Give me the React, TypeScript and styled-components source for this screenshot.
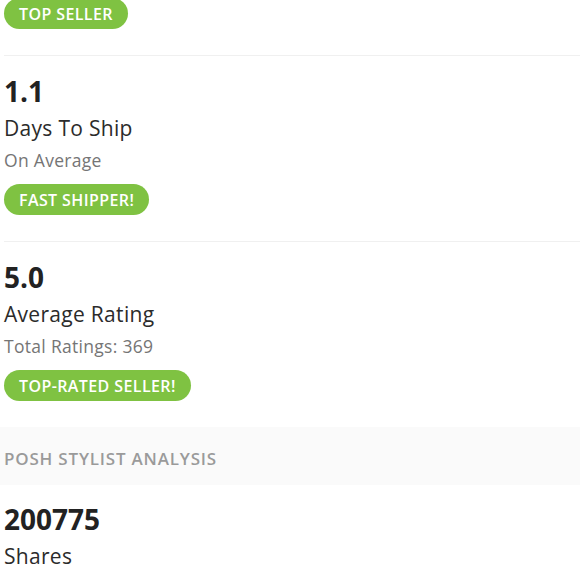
import { FC } from 'react';
import styled, { createGlobalStyle } from 'styled-components';

const GlobalStyle = createGlobalStyle`
  html, body {
    margin: 0;
    padding: 0;
    background: #ffffff;
  }
  body {
    font-family: 'Open Sans', 'Lato', Arial, sans-serif;
    color: #222222;
    overflow: hidden;
  }
`;

const Page = styled.div`
  width: 580px;
  margin-top: -2px;
`;

const StatSection = styled.section<{ $first?: boolean }>`
  margin-left: 4px;
  padding: ${({ $first }) => ($first ? '0 0 26px' : '17px 0 26px')};
  border-bottom: 1px solid #f0f0f0;
  display: flex;
  flex-direction: column;
  align-items: flex-start;
`;

const Value = styled.div`
  font-size: 28px;
  line-height: 36px;
  font-weight: 700;
  color: #222222;
`;

const Label = styled.div`
  margin-top: 5px;
  font-size: 21px;
  line-height: 28px;
  font-weight: 500;
  letter-spacing: 0.3px;
  color: #2b2b2b;
`;

const Caption = styled.div`
  margin-top: 6px;
  font-size: 17.5px;
  line-height: 24px;
  letter-spacing: 0.3px;
  color: #757575;
`;

const Badge = styled.span<{ $spaced?: boolean }>`
  margin-top: ${({ $spaced }) => ($spaced ? '12px' : '0')};
  display: inline-flex;
  align-items: center;
  height: 31px;
  padding: 0 15px;
  border-radius: 16px;
  background: #7fc242;
  color: #ffffff;
  font-size: 16px;
  font-weight: 600;
  letter-spacing: 0.4px;
  text-transform: uppercase;
`;

const SectionHeader = styled.div`
  margin-top: -1px;
  height: 58px;
  padding-left: 4px;
  padding-top: 4px;
  box-sizing: border-box;
  display: flex;
  align-items: center;
  background: #fafafa;
  color: #9a9a9a;
  font-size: 17px;
  font-weight: 600;
  letter-spacing: 0.8px;
  text-transform: uppercase;
`;

const PlainSection = styled.section`
  margin-left: 4px;
  padding-top: 16px;
`;

interface Stat {
  value: string;
  label: string;
  caption: string;
  badge: string;
}

const stats: Stat[] = [
  { value: '1.1', label: 'Days To Ship', caption: 'On Average', badge: 'Fast Shipper!' },
  { value: '5.0', label: 'Average Rating', caption: 'Total Ratings: 369', badge: 'Top-Rated Seller!' },
];

const App: FC = () => (
  <>
    <GlobalStyle />
    <Page>
      <StatSection $first>
        <Badge>Top Seller</Badge>
      </StatSection>
      {stats.map((stat) => (
        <StatSection key={stat.label}>
          <Value>{stat.value}</Value>
          <Label>{stat.label}</Label>
          <Caption>{stat.caption}</Caption>
          <Badge $spaced>{stat.badge}</Badge>
        </StatSection>
      ))}
      <SectionHeader>Posh Stylist Analysis</SectionHeader>
      <PlainSection>
        <Value>200775</Value>
        <Label>Shares</Label>
      </PlainSection>
    </Page>
  </>
);

export default App;
